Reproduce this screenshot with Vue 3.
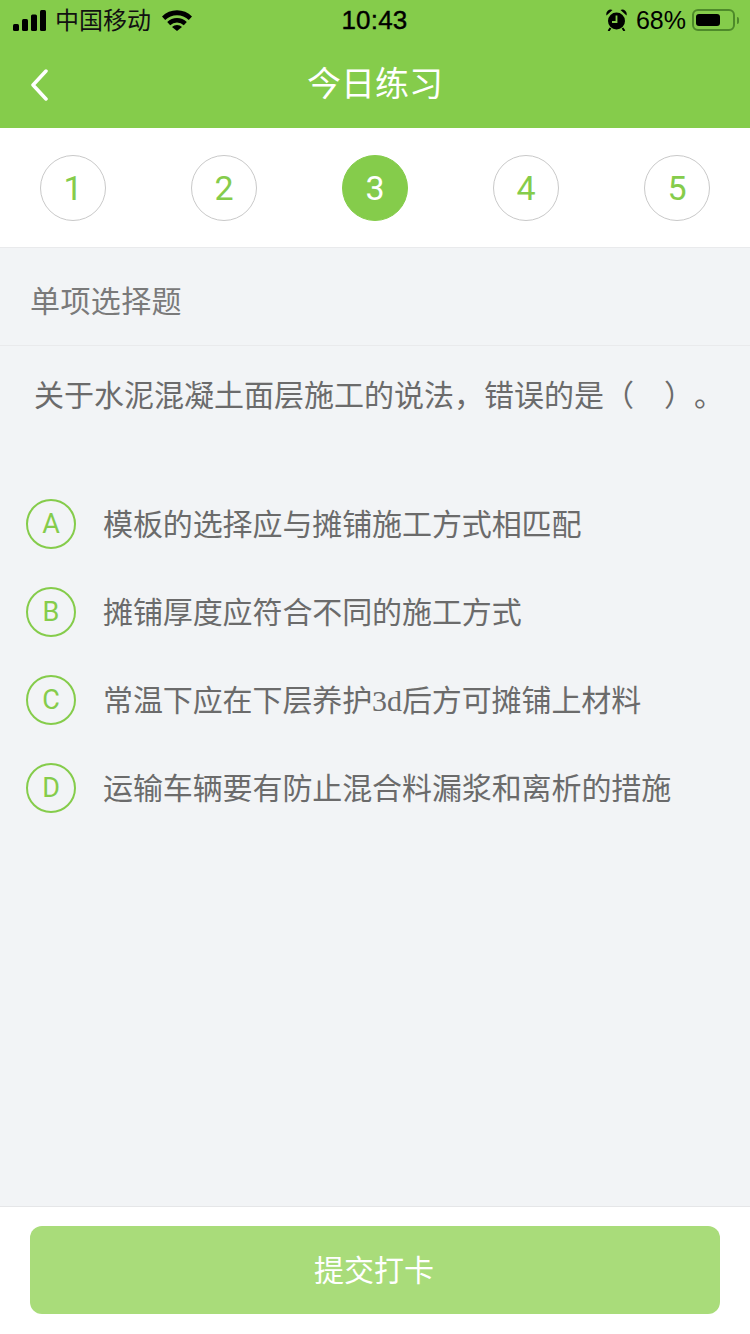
<template>
  <div class="page">
    <header class="header">
      <div class="status">
        <div class="status-left">
          <svg class="signal" width="33" height="22" viewBox="0 0 33 22">
            <rect x="0" y="14" width="6" height="7" rx="1.500" />
            <rect x="9" y="9" width="6" height="12" rx="1.500" />
            <rect x="18" y="4.500" width="6" height="16.500" rx="1.500" />
            <rect x="27" y="0" width="6" height="21" rx="1.500" />
          </svg>
          <span class="carrier">中国移动</span>
          <svg class="wifi" width="30" height="22" viewBox="0 0 30 22">
            <path d="M0 7.500A21 21 0 0 1 30 7.500L26.800 11A17 17 0 0 0 3.200 11Z" />
            <path d="M5.200 13A14 14 0 0 1 24.800 13L21.800 16.300A9.800 9.800 0 0 0 8.200 16.300Z" />
            <path d="M10 18A7.200 7.200 0 0 1 20 18L15 22Z" />
          </svg>
        </div>
        <div class="time">10:43</div>
        <div class="status-right">
          <svg class="alarm" width="21" height="22" viewBox="0 0 21 22">
            <circle cx="10.500" cy="12" r="8.500" />
            <path d="M0.500 6.500A4.500 4.500 0 0 1 6.500 1Z" />
            <path d="M20.500 6.500A4.500 4.500 0 0 0 14.500 1Z" />
            <path d="M4.500 19L2.500 22M16.500 19L18.500 22" stroke="#000" stroke-width="2" />
            <path d="M10.500 6.500V13H6" fill="none" stroke="#85cc4b" stroke-width="1.800" />
          </svg>
          <span class="percent">68%</span>
          <div class="battery">
            <div class="battery-level"></div>
          </div>
          <div class="battery-nub"></div>
        </div>
      </div>
      <div class="nav">
        <svg class="back" width="18" height="32" viewBox="0 0 18 32">
          <path d="M16 2L3 16L16 30" fill="none" stroke="#fff" stroke-width="3.500" stroke-linecap="round" stroke-linejoin="round" />
        </svg>
        <h1 class="title">今日练习</h1>
      </div>
    </header>

    <div class="steps">
      <div v-for="n in 5" :key="n" class="step" :class="{ active: n === current }">{{ n }}</div>
    </div>

    <main class="main">
      <div class="type">单项选择题</div>
      <p class="question">关于水泥混凝土面层施工的说法，错误的是（　）。</p>
      <div class="options">
        <div v-for="opt in options" :key="opt.key" class="option">
          <div class="letter">{{ opt.key }}</div>
          <div class="text">
            <template v-for="(part, i) in opt.parts" :key="i">
              <span v-if="part.latin" class="latin">{{ part.text }}</span>
              <template v-else>{{ part.text }}</template>
            </template>
          </div>
        </div>
      </div>
    </main>

    <footer class="footer">
      <button class="submit" type="button">提交打卡</button>
    </footer>
  </div>
</template>

<script setup>
const current = 3;

const options = [
  { key: "A", parts: [{ text: "模板的选择应与摊铺施工方式相匹配" }] },
  { key: "B", parts: [{ text: "摊铺厚度应符合不同的施工方式" }] },
  {
    key: "C",
    parts: [
      { text: "常温下应在下层养护" },
      { text: "3d", latin: true },
      { text: "后方可摊铺上材料" },
    ],
  },
  { key: "D", parts: [{ text: "运输车辆要有防止混合料漏浆和离析的措施" }] },
];
</script>

<style>
body {
  margin: 0;
}
</style>

<style scoped>
.page {
  width: 750px;
  height: 1334px;
  display: flex;
  flex-direction: column;
  background: #f2f4f6;
  font-family: "Liberation Sans", "Noto Sans CJK SC", sans-serif;
  overflow: hidden;
}

.header {
  height: 128px;
  background: #85cc4b;
  flex-shrink: 0;
}

.status {
  height: 40px;
  padding: 0 11px 0 13px;
  display: grid;
  grid-template-columns: 1fr auto 1fr;
  align-items: center;
  color: #000;
}

.status-left,
.status-right {
  display: flex;
  align-items: center;
}

.status-right {
  justify-content: flex-end;
}

.signal {
  margin-top: 1px;
}

.carrier {
  margin-left: 9px;
  padding-bottom: 4px;
  font-size: 24px;
  color: #111;
}

.wifi {
  margin-left: 11px;
}

.time {
  margin-left: -3px;
  font-size: 26px;
  letter-spacing: 0.2px;
  -webkit-text-stroke: 0.4px #000;
}

.alarm {
  margin-right: 9px;
}

.percent {
  font-size: 25px;
  margin-right: 6px;
}

.battery {
  width: 43px;
  height: 22px;
  box-sizing: border-box;
  border: 2px solid #4e8a2a;
  border-radius: 6px;
  padding: 3px 2px;
}

.battery-level {
  width: 24px;
  height: 100%;
  background: #000;
  border-radius: 3px;
}

.battery-nub {
  width: 2px;
  height: 7px;
  margin-left: 2px;
  background: #4e8a2a;
  border-radius: 0 2px 2px 0;
}

.nav {
  height: 88px;
  display: grid;
  grid-template-columns: 1fr auto 1fr;
  align-items: center;
}

.back {
  margin-left: 30px;
  margin-top: 1px;
}

.title {
  margin: 0 0 6px;
  grid-column: 2;
  font-size: 34px;
  font-weight: 400;
  color: #fff;
}

.steps {
  height: 120px;
  box-sizing: border-box;
  padding: 27px 40px 0;
  display: flex;
  justify-content: space-between;
  background: #fff;
  border-bottom: 1px solid #e9eaec;
  flex-shrink: 0;
}

.step {
  width: 66px;
  height: 66px;
  box-sizing: border-box;
  border: 1px solid #c9c9c9;
  border-radius: 50%;
  display: flex;
  align-items: center;
  justify-content: center;
  font-family: Roboto, "Liberation Sans", sans-serif;
  font-size: 34px;
  color: #85cc4b;
}

.step.active {
  background: #85cc4b;
  border-color: #85cc4b;
  color: #fff;
}

.main {
  flex: 1;
  min-height: 0;
}

.type {
  height: 98px;
  box-sizing: border-box;
  padding: 4px 0 0 30px;
  display: flex;
  align-items: center;
  border-bottom: 1px solid #e9eaec;
  font-size: 30px;
  letter-spacing: 0.4px;
  color: #7a7a7a;
}

.question {
  margin: 0;
  padding: 29px 0 0 34px;
  font-size: 30px;
  line-height: 42px;
  color: #6b6b6b;
  white-space: nowrap;
  text-spacing-trim: space-all;
}

.options {
  margin-top: 82px;
  padding-left: 26px;
  display: flex;
  flex-direction: column;
  gap: 38px;
}

.option {
  display: flex;
  align-items: center;
  height: 50px;
}

.letter {
  width: 50px;
  height: 50px;
  box-sizing: border-box;
  border: 2px solid #85cc4b;
  border-radius: 50%;
  display: flex;
  align-items: center;
  justify-content: center;
  font-family: Roboto, "Liberation Sans", sans-serif;
  font-size: 27px;
  color: #85cc4b;
  flex-shrink: 0;
}

.text {
  margin-left: 27px;
  padding-bottom: 4px;
  font-size: 30px;
  letter-spacing: -0.1px;
  color: #6b6b6b;
  white-space: nowrap;
}

.latin {
  font-family: "Liberation Serif", serif;
}

.footer {
  height: 128px;
  box-sizing: border-box;
  padding: 19px 30px 0;
  background: #fff;
  border-top: 1px solid #e5e6e8;
  flex-shrink: 0;
}

.submit {
  display: block;
  width: 100%;
  height: 88px;
  padding: 0 2px 4px 0;
  border: none;
  border-radius: 12px;
  background: #a9dc7a;
  color: #fff;
  font-family: inherit;
  font-size: 30px;
}
</style>
